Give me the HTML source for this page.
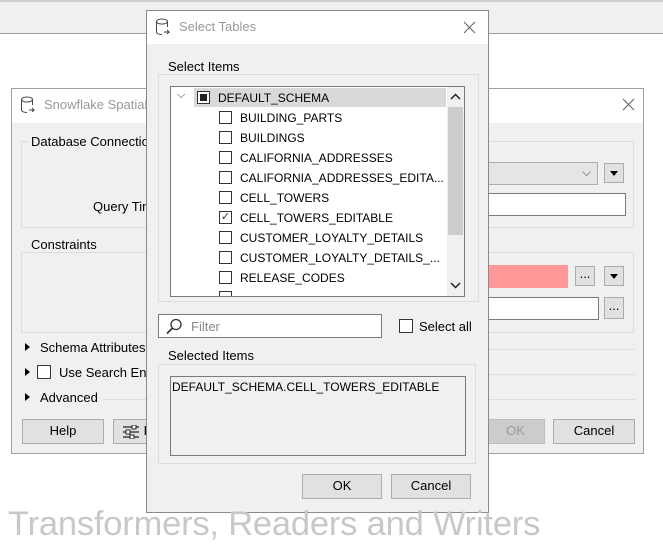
<!DOCTYPE html>
<html><head><style>
*{box-sizing:border-box;margin:0;padding:0}
body{width:663px;height:549px;position:relative;background:#fff;font-family:"Liberation Sans",sans-serif;font-size:12px;color:#000;overflow:hidden}
.a{position:absolute}
.btn{position:absolute;background:#e1e1e1;border:1px solid #adadad;text-align:center;line-height:22px;font-size:13px;white-space:nowrap;overflow:hidden}
.inp{position:absolute;background:#fff;border:1px solid #7a7a7a}
.cb{position:absolute;width:13px;height:13px;border:1px solid #333;background:#fff}
.grp{position:absolute;border:1px solid #dcdcdc}
.lbl{position:absolute;background:#f0f0f0;padding:0 2px;font-size:13px}
.row{position:absolute;left:48px;height:20px;line-height:20px;font-size:12px}
.row .cb{left:0;top:3px}
.row span{position:absolute;left:21px;white-space:nowrap}
.tri{position:absolute;width:0;height:0;border-top:4px solid transparent;border-bottom:4px solid transparent;border-left:5px solid #000}
.dd{position:absolute;width:20px;height:20px;background:#e1e1e1;border:1px solid #adadad}
.dd:after{content:"";position:absolute;left:5px;top:7px;border-left:4px solid transparent;border-right:4px solid transparent;border-top:5px solid #000}
</style></head><body>
<div class="a" style="left:0;top:0;width:663px;height:34px;background:#f0f0f0;border-top:2px solid #cfcfcf;border-bottom:1px solid #a0a0a0"></div>

<!-- back dialog -->
<div class="a" style="left:11px;top:88px;width:633px;height:366px;background:#f0f0f0;border:1px solid #a0a0a0">
  <div class="a" style="left:0;top:0;width:631px;height:34px;background:#fff"></div>
  <svg class="a" style="left:8px;top:7px" width="16" height="18" viewBox="0 0 16 18"><ellipse cx="7" cy="3.5" rx="5.5" ry="2.5" fill="none" stroke="#444"/><path d="M1.5 3.5V14c0 1.5 2.5 2.5 5.5 2.5M12.5 3.5V9" fill="none" stroke="#444"/><path d="M9 14h5l-2-2M14 14l-2 2" fill="none" stroke="#444"/></svg>
  <div class="a" style="left:32px;top:8px;font-size:13px;color:#999">Snowflake Spatial</div>
  <svg class="a" style="left:610px;top:9px" width="13" height="13" viewBox="0 0 13 13"><path d="M1 1L12 12M12 1L1 12" stroke="#666" stroke-width="1.1"/></svg>
  <div class="grp" style="left:9px;top:52px;width:613px;height:87px"></div>
  <div class="lbl" style="left:17px;top:45px">Database Connection</div>
  <div class="a" style="left:81px;top:110px;font-size:13px">Query Timeout</div>
  <div class="a" style="left:475px;top:73px;width:111px;height:23px;background:#e5e5e5;border:1px solid #adadad"></div>
  <div class="a" style="left:570px;top:76px;font-size:12px;color:#555">⌵</div>
  <div class="dd" style="left:592px;top:74px"></div>
  <div class="inp" style="left:475px;top:104px;width:139px;height:23px"></div>
  <div class="grp" style="left:9px;top:163px;width:613px;height:81px"></div>
  <div class="lbl" style="left:17px;top:148px">Constraints</div>
  <div class="a" style="left:475px;top:176px;width:81px;height:23px;background:#ff9999"></div>
  <div class="btn" style="left:563px;top:177px;width:20px;height:20px;line-height:14px">...</div>
  <div class="dd" style="left:592px;top:177px"></div>
  <div class="inp" style="left:475px;top:208px;width:112px;height:23px"></div>
  <div class="btn" style="left:592px;top:208px;width:20px;height:22px;line-height:16px">...</div>
  <div class="tri" style="left:13px;top:254px"></div>
  <div class="a" style="left:28px;top:251px;font-size:13px">Schema Attributes</div>
  <div class="a" style="left:140px;top:260px;width:483px;border-top:1px solid #ddd"></div>
  <div class="tri" style="left:13px;top:279px"></div>
  <div class="cb" style="left:25px;top:276px;width:14px;height:14px"></div>
  <div class="a" style="left:47px;top:276px;font-size:13px">Use Search Envelope</div>
  <div class="a" style="left:140px;top:285px;width:483px;border-top:1px solid #ddd"></div>
  <div class="tri" style="left:13px;top:304px"></div>
  <div class="a" style="left:28px;top:301px;font-size:13px">Advanced</div>
  <div class="a" style="left:92px;top:310px;width:531px;border-top:1px solid #ddd"></div>
  <div class="btn" style="left:10px;top:330px;width:82px;height:25px">Help</div>
  <div class="btn" style="left:101px;top:330px;width:60px;height:25px;text-align:left;padding-left:8px">
    <svg style="vertical-align:middle" width="18" height="14" viewBox="0 0 18 14"><path d="M1 2h16M1 7h16M1 12h16" stroke="#222" stroke-width="1.3"/><rect x="10" y="0" width="4" height="4" fill="#fff" stroke="#222"/><rect x="4" y="5" width="4" height="4" fill="#fff" stroke="#222"/><rect x="8" y="10" width="4" height="4" fill="#fff" stroke="#222"/></svg> Parameters</div>
  <div class="btn" style="left:474px;top:330px;width:59px;height:25px;color:#999;background:#ccc;border-color:#bfbfbf">OK</div>
  <div class="btn" style="left:541px;top:330px;width:82px;height:25px">Cancel</div>
</div>

<!-- front dialog -->
<div class="a" style="left:146px;top:10px;width:343px;height:503px;background:#f0f0f0;border:1px solid #8a8a8a">
  <div class="a" style="left:0;top:0;width:341px;height:33px;background:#fff"></div>
  <svg class="a" style="left:8px;top:7px" width="16" height="18" viewBox="0 0 16 18"><ellipse cx="7" cy="3.5" rx="5.5" ry="2.5" fill="none" stroke="#444"/><path d="M1.5 3.5V14c0 1.5 2.5 2.5 5.5 2.5M12.5 3.5V9" fill="none" stroke="#444"/><path d="M9 14h5l-2-2M14 14l-2 2" fill="none" stroke="#444"/></svg>
  <div class="a" style="left:32px;top:8px;font-size:13px;color:#999">Select Tables</div>
  <svg class="a" style="left:316px;top:10px" width="13" height="13" viewBox="0 0 13 13"><path d="M1 1L12 12M12 1L1 12" stroke="#666" stroke-width="1.1"/></svg>
  <div class="grp" style="left:11px;top:63px;width:321px;height:228px"></div>
  <div class="lbl" style="left:19px;top:48px">Select Items</div>
  <div class="a" style="left:23px;top:75px;width:295px;height:211px;background:#fff;border:1px solid #7a7a7a;overflow:hidden">
    <div class="a" style="left:23px;top:1px;width:252px;height:19px;background:#d9d9d9"></div>
    <div class="a" style="left:6px;top:2px;font-size:11px;color:#333">⌵</div>
    <div class="cb" style="left:26px;top:4px"><div style="margin:2px;width:7px;height:7px;background:#222"></div></div>
    <div class="a" style="left:47px;top:1px;line-height:20px;font-size:12px">DEFAULT_SCHEMA</div>
    <div class="row" style="top:21px"><div class="cb"></div><span>BUILDING_PARTS</span></div>
    <div class="row" style="top:41px"><div class="cb"></div><span>BUILDINGS</span></div>
    <div class="row" style="top:61px"><div class="cb"></div><span>CALIFORNIA_ADDRESSES</span></div>
    <div class="row" style="top:81px"><div class="cb"></div><span>CALIFORNIA_ADDRESSES_EDITA...</span></div>
    <div class="row" style="top:101px"><div class="cb"></div><span>CELL_TOWERS</span></div>
    <div class="row" style="top:121px"><div class="cb" style="font-size:11px;line-height:11px;text-align:center;color:#333">✓</div><span>CELL_TOWERS_EDITABLE</span></div>
    <div class="row" style="top:141px"><div class="cb"></div><span>CUSTOMER_LOYALTY_DETAILS</span></div>
    <div class="row" style="top:161px"><div class="cb"></div><span>CUSTOMER_LOYALTY_DETAILS_...</span></div>
    <div class="row" style="top:181px"><div class="cb"></div><span>RELEASE_CODES</span></div>
    <div class="row" style="top:201px"><div class="cb"></div></div>
    <div class="a" style="left:276px;top:0;width:17px;height:209px;background:#f0f0f0"></div>
    <div class="a" style="left:277px;top:20px;width:15px;height:128px;background:#cdcdcd"></div>
    <svg class="a" style="left:279px;top:6px" width="11" height="8" viewBox="0 0 11 8"><path d="M1 6L5.5 1.5L10 6" fill="none" stroke="#222" stroke-width="1.5"/></svg>
    <svg class="a" style="left:279px;top:194px" width="11" height="8" viewBox="0 0 11 8"><path d="M1 2L5.5 6.5L10 2" fill="none" stroke="#222" stroke-width="1.5"/></svg>
  </div>
  <div class="inp" style="left:11px;top:303px;width:224px;height:24px"></div>
  <svg class="a" style="left:18px;top:307px" width="18" height="17" viewBox="0 0 18 17"><circle cx="11" cy="6.5" r="5" fill="none" stroke="#333" stroke-width="1.3"/><path d="M7.5 10L2 15.5" stroke="#333" stroke-width="1.8"/></svg>
  <div class="a" style="left:44px;top:308px;font-size:13px;color:#888">Filter</div>
  <div class="cb" style="left:252px;top:308px;width:14px;height:14px"></div>
  <div class="a" style="left:272px;top:308px;font-size:13px">Select all</div>
  <div class="grp" style="left:11px;top:353px;width:318px;height:100px"></div>
  <div class="lbl" style="left:19px;top:337px">Selected Items</div>
  <div class="a" style="left:23px;top:365px;width:296px;height:80px;background:#f0f0f0;border:1px solid #7a7a7a;padding:3px 1px;font-size:12px">DEFAULT_SCHEMA.CELL_TOWERS_EDITABLE</div>
  <div class="btn" style="left:155px;top:463px;width:80px;height:25px">OK</div>
  <div class="btn" style="left:244px;top:463px;width:80px;height:25px">Cancel</div>
</div>

<div class="a" style="left:8px;top:505px;font-size:34.5px;color:#c8c8c8;white-space:nowrap;letter-spacing:-0.2px">Transformers, Readers and Writers</div>
</body></html>
